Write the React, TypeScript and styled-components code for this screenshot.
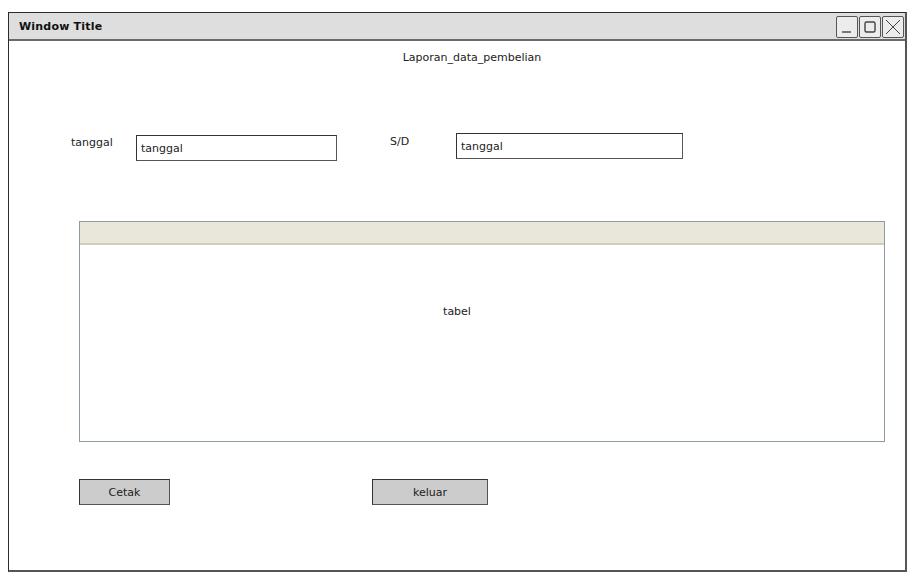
import React from 'react';
import styled, { createGlobalStyle } from 'styled-components';

const GlobalStyle = createGlobalStyle`
  html, body {
    margin: 0;
    padding: 0;
    background: #ffffff;
  }
  body {
    font-family: "DejaVu Sans", "Liberation Sans", sans-serif;
    color: #222222;
  }
`;

const Page = styled.div`
  padding: 12px 0 0 8px;
  width: 918px;
  height: 577px;
  box-sizing: border-box;
`;

const Window = styled.div`
  width: 899px;
  height: 560px;
  box-sizing: border-box;
  border: 1px solid #2b2b2b;
  border-right: 2px solid #555555;
  border-bottom: 2px solid #555555;
  display: flex;
  flex-direction: column;
  background: #ffffff;
`;

const TitleBar = styled.div`
  height: 28px;
  box-sizing: border-box;
  background: #dedede;
  border-bottom: 2px solid #6a6a6a;
  display: flex;
  align-items: center;
  justify-content: space-between;
  padding: 0 1px 0 10px;
`;

const TitleText = styled.div`
  font-size: 11px;
  font-weight: bold;
  color: #111111;
  letter-spacing: 0.2px;
  margin-top: 1px;
`;

const TitleButtons = styled.div`
  display: flex;
  gap: 1px;
  margin-top: 2px;
`;

const TitleButton = styled.div`
  width: 22px;
  height: 22px;
  box-sizing: border-box;
  border: 1.5px solid #555555;
  border-radius: 2px;
  background: #ececec;
  display: flex;
  align-items: center;
  justify-content: center;
`;

const Body = styled.div`
  flex: 1;
  display: flex;
  flex-direction: column;
  padding-top: 9px;
`;

const Heading = styled.div`
  height: 16px;
  line-height: 16px;
  font-size: 11px;
  text-align: center;
  padding-left: 30px;
`;

const FieldRow = styled.div`
  display: flex;
  align-items: flex-start;
  margin: 67px 0 0 62px;
  height: 27px;
`;

const Label = styled.div<{ $width: number; $top: number }>`
  width: ${(p) => p.$width}px;
  font-size: 11px;
  margin-top: ${(p) => p.$top}px;
`;

const Input = styled.div<{ $width: number; $top: number }>`
  width: ${(p) => p.$width}px;
  height: 26px;
  margin-top: ${(p) => p.$top}px;
  box-sizing: border-box;
  border: 1px solid #333333;
  border-right: 1.5px solid #555555;
  border-bottom: 1.5px solid #555555;
  background: #ffffff;
  font-size: 11px;
  padding: 0 4px;
  display: flex;
  align-items: center;
`;

const Spacer = styled.div<{ $width: number }>`
  width: ${(p) => p.$width}px;
`;

const Table = styled.div`
  margin: 61px 0 0 70px;
  width: 806px;
  height: 221px;
  box-sizing: border-box;
  border: 1px solid #8c9ca6;
  display: flex;
  flex-direction: column;
`;

const TableHeader = styled.div`
  height: 21px;
  background: #e9e7da;
  border-bottom: 2px solid #d2ccbd;
`;

const TableBody = styled.div`
  flex: 1;
  display: flex;
  align-items: center;
  justify-content: center;
  font-size: 11px;
  padding: 0 50px 64px 0;
`;

const ButtonRow = styled.div`
  display: flex;
  margin: 37px 0 0 70px;
`;

const Button = styled.div<{ $width: number }>`
  width: ${(p) => p.$width}px;
  height: 26px;
  box-sizing: border-box;
  background: #cccccc;
  border: 1px solid #333333;
  border-right: 1.5px solid #555555;
  border-bottom: 1.5px solid #555555;
  font-size: 11px;
  display: flex;
  align-items: center;
  justify-content: center;
`;

function MinIcon() {
  return (
    <svg width="14" height="14" viewBox="0 0 14 14">
      <line x1="2" y1="12" x2="11" y2="12" stroke="#444" strokeWidth="1.4" />
    </svg>
  );
}

function MaxIcon() {
  return (
    <svg width="14" height="14" viewBox="0 0 14 14">
      <rect x="2" y="2" width="10" height="10" rx="1.5" fill="none" stroke="#444" strokeWidth="1.4" />
    </svg>
  );
}

function CloseIcon() {
  return (
    <svg width="16" height="16" viewBox="0 0 16 16">
      <path d="M1 1 L15 15 M15 1 L1 15" stroke="#444" strokeWidth="1" />
    </svg>
  );
}

export default function App() {
  return (
    <Page>
      <GlobalStyle />
      <Window>
        <TitleBar>
          <TitleText>Window Title</TitleText>
          <TitleButtons>
            <TitleButton><MinIcon /></TitleButton>
            <TitleButton><MaxIcon /></TitleButton>
            <TitleButton><CloseIcon /></TitleButton>
          </TitleButtons>
        </TitleBar>
        <Body>
          <Heading>Laporan_data_pembelian</Heading>
          <FieldRow>
            <Label $width={65} $top={3}>tanggal</Label>
            <Input $width={201} $top={2}>tanggal</Input>
            <Spacer $width={53} />
            <Label $width={66} $top={2}>S/D</Label>
            <Input $width={227} $top={0}>tanggal</Input>
          </FieldRow>
          <Table>
            <TableHeader />
            <TableBody>tabel</TableBody>
          </Table>
          <ButtonRow>
            <Button $width={91}>Cetak</Button>
            <Spacer $width={202} />
            <Button $width={116}>keluar</Button>
          </ButtonRow>
        </Body>
      </Window>
    </Page>
  );
}
